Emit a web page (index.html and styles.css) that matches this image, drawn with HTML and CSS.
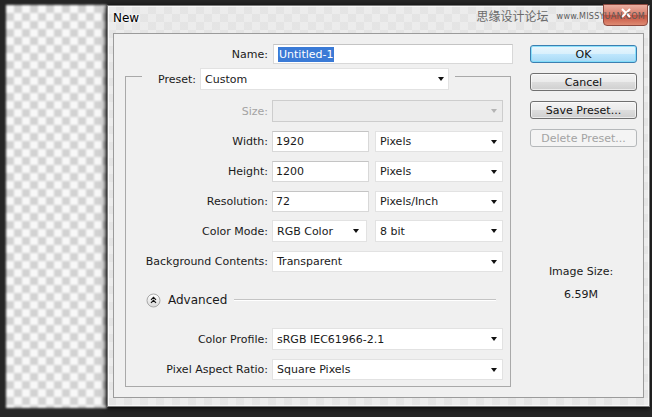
FILE: index.html
```html
<!DOCTYPE html>
<html>
<head>
<meta charset="utf-8">
<link rel="stylesheet" href="styles.css">
</head>
<body>
<div class="stage">
  <div class="checker"></div>
  <div class="dialog">
    <span class="close-btn"><svg width="14" height="10" viewBox="0 0 14 10"><path d="M3 1 L11 9 M11 1 L3 9" stroke="#fff" stroke-width="2" fill="none"/></svg></span>
    <div class="titlebar">
      <span class="title">New</span>
      <span class="watermark"><span class="wm-cn">思缘设计论坛</span><span class="wm-en">www.MISSYUAN.COM</span></span>
    </div>
    <div class="client">
      <div class="main">
        <div class="row name-row">
          <span class="lbl name-lbl">Name:</span>
          <div class="input name-input"><span class="sel">Untitled-1</span></div>
        </div>
        <fieldset class="group">
          <legend class="preset">
            <span class="lbl preset-lbl">Preset:</span>
            <div class="select preset-select"><span>Custom</span><span class="arrow"></span></div>
          </legend>
          <div class="row first">
            <span class="lbl disabled">Size:</span>
            <div class="select full is-disabled"><span></span><span class="arrow"></span></div>
          </div>
          <div class="row">
            <span class="lbl">Width:</span>
            <div class="input num">1920</div>
            <div class="select unit"><span>Pixels</span><span class="arrow"></span></div>
          </div>
          <div class="row">
            <span class="lbl">Height:</span>
            <div class="input num">1200</div>
            <div class="select unit"><span>Pixels</span><span class="arrow"></span></div>
          </div>
          <div class="row">
            <span class="lbl">Resolution:</span>
            <div class="input num">72</div>
            <div class="select unit"><span>Pixels/Inch</span><span class="arrow"></span></div>
          </div>
          <div class="row tight">
            <span class="lbl">Color Mode:</span>
            <div class="select mode"><span>RGB Color</span><span class="arrow"></span></div>
            <div class="select unit bits"><span>8 bit</span><span class="arrow"></span></div>
          </div>
          <div class="row">
            <span class="lbl">Background Contents:</span>
            <div class="select full"><span>Transparent</span><span class="arrow"></span></div>
          </div>
          <div class="adv-row">
            <svg class="adv-icon" width="15" height="15" viewBox="0 0 15 15">
              <defs><linearGradient id="ag" x1="0" y1="0" x2="0" y2="1"><stop offset="0" stop-color="#ffffff"/><stop offset="1" stop-color="#d8d8d8"/></linearGradient></defs>
              <circle cx="7.5" cy="7.5" r="6.5" fill="url(#ag)" stroke="#a8a8a8"/>
              <path d="M5 6.8 L7.5 4.3 L10 6.8 M5 9.8 L7.5 7.3 L10 9.8" fill="none" stroke="#111" stroke-width="1.2"/>
            </svg>
            <span class="adv-text">Advanced</span>
            <span class="adv-line"></span>
          </div>
          <div class="row profile">
            <span class="lbl">Color Profile:</span>
            <div class="select full"><span>sRGB IEC61966-2.1</span><span class="arrow"></span></div>
          </div>
          <div class="row">
            <span class="lbl">Pixel Aspect Ratio:</span>
            <div class="select full"><span>Square Pixels</span><span class="arrow"></span></div>
          </div>
        </fieldset>
      </div>
      <div class="side">
        <div class="btn default">OK</div>
        <div class="btn">Cancel</div>
        <div class="btn">Save Preset...</div>
        <div class="btn is-disabled">Delete Preset...</div>
        <div class="image-size">
          <div class="is-label">Image Size:</div>
          <div class="is-value">6.59M</div>
        </div>
      </div>
    </div>
  </div>
</div>
</body>
</html>
```

FILE: styles.css
```css
html, body {
  margin: 0;
  padding: 0;
}
body {
  width: 652px;
  height: 417px;
  overflow: hidden;
  background: #262626;
  font-family: "DejaVu Sans", "Liberation Sans", sans-serif;
  font-size: 11px;
  color: #1a1a1a;
}
.stage {
  display: flex;
  align-items: flex-start;
  box-sizing: border-box;
  height: 417px;
  padding: 5px 0 0 6px;
}
.checker {
  width: 101px;
  height: 403px;
  flex: none;
  filter: blur(1.2px);
  background: conic-gradient(#d2d2d2 25%, #f8f8f8 0 50%, #d2d2d2 0 75%, #f8f8f8 0) 0 0 / 16px 16px;
}
.dialog {
  position: relative;
  width: 543px;
  height: 402px;
  flex: none;
  box-sizing: border-box;
  display: flex;
  flex-direction: column;
  border: 1px solid #7b7b7b;
  box-shadow: -3px 0 4px rgba(0,0,0,0.55), 0 2px 4px rgba(0,0,0,0.5), inset 0 0 0 1px rgba(255,255,255,0.7);
  background:
    linear-gradient(rgba(232,232,232,0.82), rgba(232,232,232,0.82)),
    conic-gradient(#d4d4d4 25%, #ffffff 0 50%, #d4d4d4 0 75%, #ffffff 0) 0 0 / 16px 16px;
}
.close-btn {
  position: absolute;
  top: -2px;
  right: 1px;
  width: 45px;
  height: 22px;
  box-sizing: border-box;
  border: 1px solid #8e4a40;
  border-radius: 0 0 4px 4px;
  background: linear-gradient(#eab0a2, #d77a68 50%, #c4503e 51%, #de8a72);
  display: flex;
  justify-content: center;
  padding-top: 3px;
}
.titlebar {
  position: relative;
  height: 27px;
  display: flex;
  justify-content: space-between;
  align-items: flex-start;
  padding: 0 4px 0 5px;
}
.title {
  font-size: 12px;
  color: #000;
  margin-top: 5px;
  text-shadow: 0 0 4px #fff, 0 0 2px #fff;
}
.watermark {
  display: flex;
  align-items: center;
  margin-top: 3px;
  color: #6a6a6a;
}
.wm-cn {
  font-family: "Noto Sans CJK SC", sans-serif;
  font-size: 12px;
  line-height: 14px;
  margin-right: 8px;
}
.wm-en {
  font-family: "DejaVu Sans", sans-serif;
  font-size: 8px;
  letter-spacing: 0.25px;
  color: #5a5a5a;
}
.client {
  height: 365px;
  margin: 0 5px;
  box-sizing: border-box;
  border: 1px solid #9b9b9b;
  background: #f0f0f0;
  display: flex;
}
.main {
  width: 399px;
  flex: none;
}
.row {
  display: flex;
  align-items: center;
  height: 21px;
  margin-top: 9px;
}
.row.first {
  margin-top: 10px;
  height: 22px;
}
.row.tight {
  margin-top: 8px;
  height: 22px;
}
.row.profile {
  margin-top: 20px;
  height: 22px;
}
.lbl {
  width: 142px;
  padding-right: 4px;
  text-align: right;
  flex: none;
  white-space: nowrap;
}
.lbl.disabled {
  color: #a3a3a3;
}
.name-row {
  margin-top: 10px;
  height: 20px;
}
.name-lbl {
  width: 154px;
  padding-right: 5px;
}
.input {
  height: 100%;
  box-sizing: border-box;
  background: #fff;
  border: 1px solid #d8d8d8;
  border-top-color: #c4c4c4;
  display: flex;
  align-items: center;
  padding-left: 3px;
}
.name-input {
  width: 240px;
  padding-left: 4px;
}
.sel {
  background: #3a7ad6;
  color: #fff;
  padding: 1px;
}
.num {
  width: 97px;
  margin-right: 6px;
}
.select {
  height: 100%;
  box-sizing: border-box;
  background: #fff;
  border: 1px solid #e2e2e2;
  display: flex;
  align-items: center;
  justify-content: space-between;
  padding: 0 5px 0 4px;
  white-space: nowrap;
}
.arrow {
  width: 0;
  height: 0;
  border-left: 3.5px solid transparent;
  border-right: 3.5px solid transparent;
  border-top: 4px solid #111;
}
.select.is-disabled {
  background: #ececec;
  border-color: #cdcdcd;
}
.select.is-disabled .arrow {
  border-top-color: #b4b4b4;
}
.full {
  width: 231px;
}
.unit {
  width: 128px;
}
.mode {
  width: 95px;
  margin-right: 8px;
  padding-right: 7px;
}
.group {
  margin: -2px 0 0 11px;
  padding: 0;
  width: 386px;
  height: 325px;
  box-sizing: border-box;
  border: 1px solid #a9a9a9;
  min-width: 0;
}
.preset {
  margin-left: 16px;
  padding: 6px 6px 0 0;
  display: flex;
  align-items: center;
}
.preset-lbl {
  width: 54px;
  padding-right: 4px;
  box-sizing: content-box;
}
.preset-select {
  width: 249px;
  height: 22px;
  padding-right: 4px;
}
.adv-row {
  display: flex;
  align-items: center;
  height: 16px;
  margin-top: 20px;
  padding-left: 20px;
}
.adv-icon {
  flex: none;
}
.adv-text {
  font-size: 12px;
  margin-left: 7px;
}
.adv-line {
  flex: 1;
  height: 1px;
  background: #c4c4c4;
  border-bottom: 1px solid #fff;
  margin: 0 14px 0 7px;
}
.side {
  width: 107px;
  margin-left: 17px;
  padding-top: 11px;
  flex: none;
}
.btn {
  height: 18px;
  box-sizing: border-box;
  margin-bottom: 10px;
  border: 1px solid #707070;
  border-radius: 3px;
  background: linear-gradient(#f3f3f3, #ebebeb 48%, #dddddd 52%, #cfcfcf);
  display: flex;
  align-items: center;
  justify-content: center;
  color: #111;
  white-space: nowrap;
  box-shadow: inset 0 0 0 1px rgba(255,255,255,0.6);
}
.btn.default {
  border-color: #3c7fb1;
  background: linear-gradient(#eaf6fd, #d9f0fc 48%, #bee6fd 52%, #a7d9f5);
  box-shadow: inset 0 0 0 1px rgba(120,220,250,0.8);
}
.btn.is-disabled {
  border-color: #b5b8ba;
  background: #f4f4f4;
  color: #a3a3a3;
  box-shadow: none;
}
.image-size {
  margin-top: 118px;
  text-align: center;
  padding-right: 5px;
  line-height: 14px;
}
.is-value {
  margin-top: 9px;
}
```
